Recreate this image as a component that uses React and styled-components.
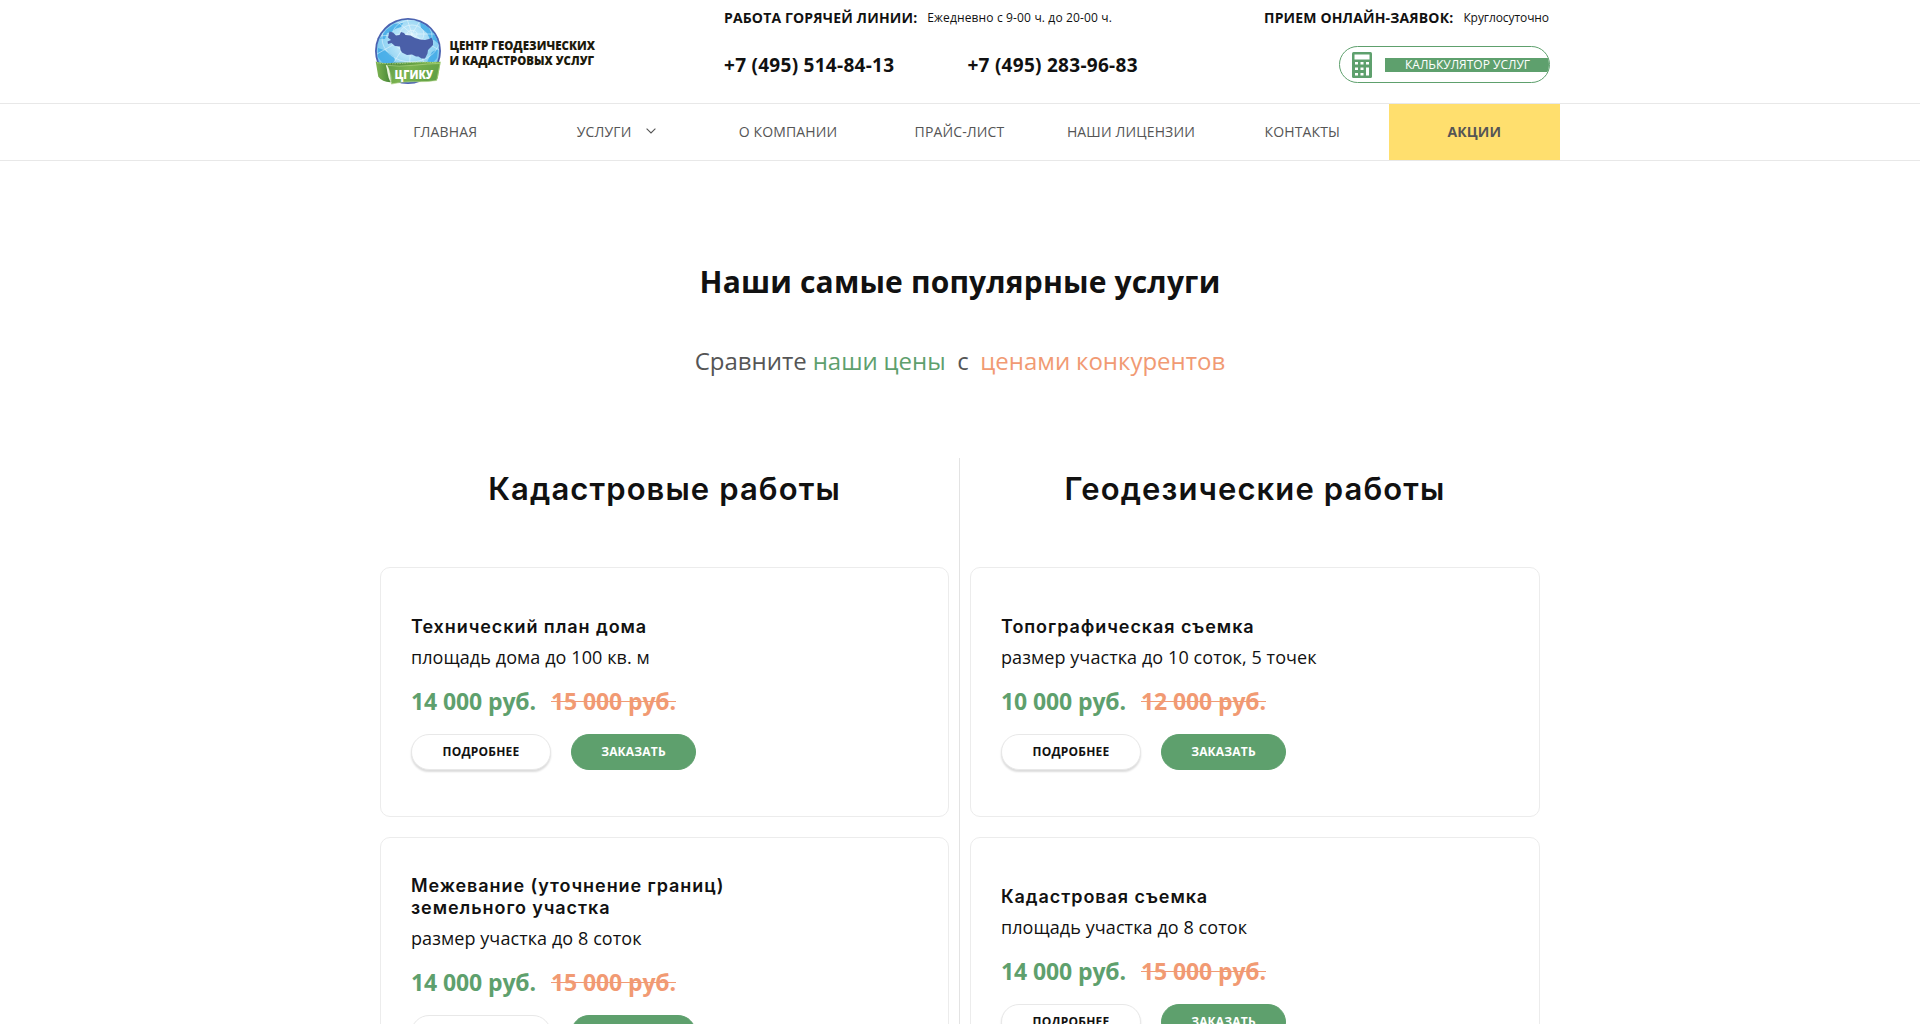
import React from "react";
import styled, { createGlobalStyle, css } from "styled-components";

const GREEN = "#5ea06d";
const ORANGE = "#f19a73";
const INK = "#111";
const LINE = "#e8e8e8";

const Global = createGlobalStyle`
  *, *::before, *::after { box-sizing: border-box; }
  body {
    margin: 0;
    background: #fff;
    color: ${INK};
    font-family: "Open Sans", "Noto Sans", sans-serif;
  }
  h1, h2, h3, p { margin: 0; }
  a { color: inherit; text-decoration: none; }
`;

const Page = styled.div`
  height: 1024px;
  overflow: hidden;
`;

const Container = styled.div`
  width: 1200px;
  margin: 0 auto;
`;

const Header = styled(Container).attrs({ as: "header" })`
  height: 103px;
  display: grid;
  grid-template-columns: 364px 1fr 300px;
  padding-right: 10px;
`;

const Logo = styled.a`
  padding: 16px 0 0 13px;
  svg { display: block; overflow: visible; }
`;

const Contacts = styled.div`
  display: flex;
  flex-direction: column;
  padding-top: 7px;
  align-items: ${(p) => (p.$end ? "flex-end" : "flex-start")};
`;

const Schedule = styled.div`
  display: flex;
  align-items: center;
  height: 22px;
  margin-right: 1px;
  gap: 10px;
  white-space: nowrap;
`;

const ScheduleLabel = styled.span`
  font-size: 14px;
  font-weight: 700;
  line-height: 22px;
  letter-spacing: 0.16px;
`;

const ScheduleValue = styled.span`
  font-size: 12px;
  line-height: 22px;
  letter-spacing: ${(p) => p.$ls || "0"};
`;

const Phones = styled.div`
  display: flex;
  gap: 73px;
  margin-top: 23px;
`;

const Phone = styled.a`
  font-size: 19px;
  font-weight: 700;
  line-height: 26px;
  letter-spacing: 0.28px;
  white-space: nowrap;
`;

const Calculator = styled.a`
  display: flex;
  align-items: center;
  width: 211px;
  height: 37px;
  margin-top: 17px;
  padding-left: 12px;
  gap: 13px;
  border: 1px solid ${GREEN};
  border-radius: 20px;
  overflow: hidden;
`;

const CalculatorLabel = styled.span`
  flex: 1;
  height: 14px;
  padding-left: 20px;
  background: ${GREEN};
  color: #fff;
  font-size: 12px;
  line-height: 13px;
  white-space: nowrap;
`;

const NavBar = styled.nav`
  height: 58px;
  border-top: 1px solid ${LINE};
  border-bottom: 1px solid ${LINE};
`;

const NavList = styled(Container)`
  display: grid;
  grid-template-columns: repeat(7, 1fr);
  height: 56px;
`;

const NavItem = styled.a`
  display: flex;
  align-items: center;
  justify-content: center;
  gap: 15px;
  padding: 0 1px 2px 0;
  color: #555;
  font-size: 14px;
  letter-spacing: 0.14px;
  white-space: nowrap;
  ${(p) =>
    p.$accent &&
    css`
      padding-right: 0;
      background: #ffdf6e;
      font-weight: 700;
    `}
`;

const Title = styled.h1`
  margin-top: 101px;
  font-size: 30px;
  line-height: 40px;
  font-weight: 700;
  letter-spacing: 0.17px;
  text-align: center;
`;

const Lead = styled.p`
  margin-top: 43px;
  color: #555;
  font-size: 24px;
  line-height: 32px;
  word-spacing: -0.45px;
  text-align: center;
  white-space: pre;
`;

const Accent = styled.span`
  color: ${(p) => p.$color};
`;

const Columns = styled(Container)`
  display: grid;
  grid-template-columns: 1fr 1fr;
  margin-top: 81px;
`;

const Column = styled.section`
  display: flex;
  flex-direction: column;
  gap: 20px;
  height: 700px;
  padding: 0 11px 0 20px;
  & + & {
    padding: 0 20px 0 10px;
    border-left: 1px solid #e3e3e3;
    margin-left: -1px;
  }
`;

const ColumnTitle = styled.h2`
  height: 89px;
  padding-top: 12px;
  font-family: Inter, "Open Sans", sans-serif;
  font-size: 31px;
  line-height: 38px;
  font-weight: 600;
  letter-spacing: 1.1px;
  text-align: center;
`;

const Card = styled.article`
  display: flex;
  flex-direction: column;
  justify-content: center;
  flex: none;
  height: 250px;
  padding: 2px 30px 0;
  border: 1px solid #ececec;
  border-radius: 10px;
`;

const CardTitle = styled.h3`
  max-width: 340px;
  font-family: Inter, "Open Sans", sans-serif;
  font-size: 18px;
  line-height: 22px;
  font-weight: 600;
  letter-spacing: 0.93px;
`;

const CardText = styled.p`
  margin-top: 6px;
  font-size: 18px;
  line-height: 26px;
  letter-spacing: 0.08px;
`;

const Prices = styled.div`
  display: flex;
  gap: 15px;
  margin-top: 14px;
  font-size: 23px;
  line-height: 34px;
  font-weight: 700;
  letter-spacing: -0.11px;
`;

const Price = styled.span`
  color: ${GREEN};
`;

const OldPrice = styled.del`
  color: ${ORANGE};
  text-decoration: line-through;
  text-decoration-thickness: 1px;
`;

const Actions = styled.div`
  display: flex;
  gap: 20px;
  margin-top: 16px;
`;

const Button = styled.a`
  display: flex;
  align-items: center;
  justify-content: center;
  width: ${(p) => (p.$primary ? 125 : 140)}px;
  height: 36px;
  padding-bottom: 2px;
  border: 1px solid ${(p) => (p.$primary ? GREEN : "#e8e8e8")};
  border-radius: 18px;
  background: ${(p) => (p.$primary ? GREEN : "#fff")};
  color: ${(p) => (p.$primary ? "#fff" : INK)};
  box-shadow: ${(p) => (p.$primary ? "none" : "0 2px 2px rgba(0, 0, 0, 0.14)")};
  font-size: 12px;
  font-weight: 700;
  letter-spacing: 0.2px;
`;

const Emblem = () => (
  <svg width="230" height="72" viewBox="0 0 230 72">
    <defs>
      <radialGradient id="sea" cx="0.52" cy="0.35" r="0.62">
        <stop offset="0" stopColor="#e2f5fd" />
        <stop offset="0.5" stopColor="#a5dcf6" />
        <stop offset="1" stopColor="#6cc2ee" />
      </radialGradient>
      <linearGradient id="fold" x1="0" y1="0" x2="1" y2="0">
        <stop offset="0" stopColor="#7fb552" />
        <stop offset="0.2" stopColor="#4f8d3b" />
        <stop offset="1" stopColor="#86bd50" />
      </linearGradient>
      <linearGradient id="label" x1="0" y1="0" x2="1" y2="0.3">
        <stop offset="0" stopColor="#5d9c44" />
        <stop offset="0.45" stopColor="#7bb350" />
        <stop offset="1" stopColor="#62a145" />
      </linearGradient>
      <clipPath id="disc">
        <circle cx="35" cy="35" r="31.2" />
      </clipPath>
    </defs>
    <circle cx="35" cy="35" r="33" fill="#4b62b0" />
    <circle cx="35" cy="35" r="31.2" fill="url(#sea)" />
    <g clipPath="url(#disc)">
      <path
        d="M7 23l6-9 8-6 9-1-2 4-6 2-3 3-5 1-2 6zM47 6l9 5 7 9 3 8-5-4-4-1-3-6-6-5zM5 32l6 2 5 3 5 4 2 8-12 0-6-8zM59 36l6-3-1 9-6 7-5-1 3-6z"
        fill="#3da9e6"
        opacity="0.8"
      />
      <g fill="none" stroke="#f4fbff" strokeWidth="0.6" opacity="0.8">
        <ellipse cx="39" cy="18" rx="5" ry="3.5" />
        <ellipse cx="39" cy="18" rx="12" ry="9" />
        <ellipse cx="39" cy="20" rx="20" ry="16" />
        <ellipse cx="38" cy="22" rx="29" ry="24" />
        <path d="M39 18L20 2M39 18L33 0M39 18L50 0M39 18L66 18M39 18L66 34M39 18L54 54M39 18L36 54M39 18L16 54M39 18L4 38M39 18L4 20" />
      </g>
      <path
        d="M16.5 15.5L20 16.5L23 19.5L26.5 19L28 16L31 17L32.5 19L37.5 19.5L42 22L47 23.5L52 24L56 23L58.5 21.5L60 25L60 29L57.5 31.5L55 34L54.5 37.5L52 42.5L48.5 42.5L45.5 40.5L43 40.5L39 38.5L34 39L29 36.5L27.5 34L27 30.5L22 30L18.5 27L15 28L14.5 25.5L18 24L15 21.5Z"
        fill="#4a5fa8"
      />
    </g>
    <path d="M2.7 45.5q8 2.5 18 1.2l47-1-3 17-46 3.4q-9 0.6-13.4-5.4z" fill="url(#fold)" />
    <path d="M4 46.8q15 2 31 0t29 0.4" fill="none" stroke="#c3e09a" strokeWidth="0.8" strokeDasharray="1.5 1" />
    <path
      d="M13.5 49.3q12 1.6 27 0t26.5-1.8l-3.3 17q-10 1.6-22 1.2t-23.4 2.4q1-10-4.8-18.8z"
      fill="url(#label)"
      stroke="#b5d78c"
      strokeWidth="0.6"
    />
    <path d="M12.8 49q2.6 0 4.3 9 0.8 4 0.8 9-3-6-3.4-10t-1.7-8z" fill="#eef6e2" />
    <g fontFamily='"Open Sans", sans-serif' fontWeight="800">
      <text x="21.5" y="62.8" fontSize="12.4" fill="#fff" textLength="38.5" lengthAdjust="spacingAndGlyphs">ЦГИКУ</text>
      <g fontSize="12.5" fill="#1d1a0c">
        <text x="76.5" y="34.2" textLength="145.5" lengthAdjust="spacingAndGlyphs">ЦЕНТР ГЕОДЕЗИЧЕСКИХ</text>
        <text x="76.5" y="49.2" textLength="144.5" lengthAdjust="spacingAndGlyphs">И КАДАСТРОВЫХ УСЛУГ</text>
      </g>
    </g>
  </svg>
);

const CalcIcon = () => (
  <svg width="20" height="26" viewBox="0 0 20 26">
    <rect width="20" height="26" rx="1.5" fill={GREEN} />
    <g fill="#fff">
      <rect x="2.5" y="2.5" width="15" height="5" />
      <rect x="3" y="10" width="3" height="2.5" />
      <rect x="8.5" y="10" width="3" height="2.5" />
      <rect x="14" y="10" width="3" height="2.5" />
      <rect x="3" y="15.5" width="3" height="2.5" />
      <rect x="8.5" y="15.5" width="3" height="2.5" />
      <rect x="3" y="21" width="3" height="2.5" />
      <rect x="8.5" y="21" width="3" height="2.5" />
      <rect x="14" y="15.5" width="3" height="8" />
    </g>
  </svg>
);

const Chevron = () => (
  <svg width="10" height="6" viewBox="0 0 10 6" fill="none" stroke="#555" strokeWidth="1.1">
    <path d="M0.6 0.6L5 4.9L9.4 0.6" />
  </svg>
);

const nav = [
  { text: "ГЛАВНАЯ" },
  { text: "УСЛУГИ", menu: true },
  { text: "О КОМПАНИИ" },
  { text: "ПРАЙС-ЛИСТ" },
  { text: "НАШИ ЛИЦЕНЗИИ" },
  { text: "КОНТАКТЫ" },
  { text: "АКЦИИ", accent: true },
];

const columns = [
  {
    title: "Кадастровые работы",
    cards: [
      { title: "Технический план дома", text: "площадь дома до 100 кв. м", price: "14 000 руб.", old: "15 000 руб." },
      { title: "Межевание (уточнение границ) земельного участка", text: "размер участка до 8 соток", price: "14 000 руб.", old: "15 000 руб." },
    ],
  },
  {
    title: "Геодезические работы",
    cards: [
      { title: "Топографическая съемка", text: "размер участка до 10 соток, 5 точек", price: "10 000 руб.", old: "12 000 руб." },
      { title: "Кадастровая съемка", text: "площадь участка до 8 соток", price: "14 000 руб.", old: "15 000 руб." },
    ],
  },
];

export default function App() {
  return (
    <Page>
      <Global />
      <Header>
        <Logo href="#"><Emblem /></Logo>
        <Contacts>
          <Schedule>
            <ScheduleLabel>РАБОТА ГОРЯЧЕЙ ЛИНИИ:</ScheduleLabel>
            <ScheduleValue $ls="0.14px">Ежедневно с 9-00 ч. до 20-00 ч.</ScheduleValue>
          </Schedule>
          <Phones>
            <Phone href="#">+7 (495) 514-84-13</Phone>
            <Phone href="#">+7 (495) 283-96-83</Phone>
          </Phones>
        </Contacts>
        <Contacts $end>
          <Schedule>
            <ScheduleLabel>ПРИЕМ ОНЛАЙН-ЗАЯВОК:</ScheduleLabel>
            <ScheduleValue $ls="-0.08px">Круглосуточно</ScheduleValue>
          </Schedule>
          <Calculator href="#">
            <CalcIcon />
            <CalculatorLabel>КАЛЬКУЛЯТОР УСЛУГ</CalculatorLabel>
          </Calculator>
        </Contacts>
      </Header>
      <NavBar>
        <NavList>
          {nav.map((item) => (
            <NavItem key={item.text} href="#" $accent={item.accent}>
              {item.text}
              {item.menu && <Chevron />}
            </NavItem>
          ))}
        </NavList>
      </NavBar>
      <Title>Наши самые популярные услуги</Title>
      <Lead>
        Сравните <Accent $color={GREEN}>наши цены</Accent>{"  с  "}
        <Accent $color={ORANGE}>ценами конкурентов</Accent>
      </Lead>
      <Columns>
        {columns.map((column) => (
          <Column key={column.title}>
            <ColumnTitle>{column.title}</ColumnTitle>
            {column.cards.map((card) => (
              <Card key={card.title}>
                <CardTitle>{card.title}</CardTitle>
                <CardText>{card.text}</CardText>
                <Prices>
                  <Price>{card.price}</Price>
                  <OldPrice>{card.old}</OldPrice>
                </Prices>
                <Actions>
                  <Button href="#">ПОДРОБНЕЕ</Button>
                  <Button href="#" $primary>ЗАКАЗАТЬ</Button>
                </Actions>
              </Card>
            ))}
          </Column>
        ))}
      </Columns>
    </Page>
  );
}
